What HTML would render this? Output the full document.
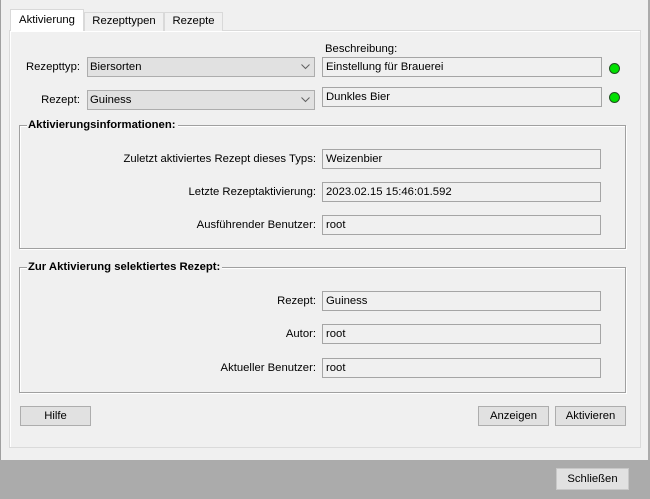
<!DOCTYPE html>
<html><head><meta charset="utf-8"><style>
*{box-sizing:border-box;margin:0;padding:0}
body{width:650px;height:499px;background:#ababab;font-family:"Liberation Sans",Arial,sans-serif;font-size:11.3px;color:#000;position:relative;overflow:hidden}
.a{position:absolute}
#win{left:0;top:0;width:648px;height:460px;background:#f0f0f0;border-left:1px solid #a0a0a0}
#panel{left:9px;top:30px;width:632px;height:418px;border:1px solid #dadada;background:#f0f0f0;box-shadow:inset 1px 1px 0 #fff}
.tab{top:12px;height:19px;border:1px solid #d9d9d9;border-bottom:none;background:#f0f0f0;text-align:center;line-height:17px}
.tab.sel{top:9px;height:22px;background:#fff;line-height:21px;z-index:2}
.lbl{white-space:nowrap;line-height:14px}
.r{text-align:right}
.tb{height:20px;border:1px solid #a5a5a5;background:#f0f0f0;padding-left:3px;line-height:18px;white-space:nowrap}
.cb{height:20px;border:1px solid #adadad;background:#e1e1e1;padding-left:2px;line-height:18px}
.cb svg{position:absolute;right:4px;top:6px}
.dot{width:11px;height:11px;border-radius:50%;background:#00e000;border:1px solid #205020}
.grp{border:1px solid #a0a0a0;box-shadow:1px 1px 0 #fff,inset 1px 1px 0 #fff}
.gt{background:#f0f0f0;font-weight:bold;padding:0 2px 0 1px;line-height:14px}
.btn{height:20px;border:1px solid #adadad;background:#e1e1e1;text-align:center;line-height:18px}
</style></head><body>
<div id="win" class="a"></div>
<div id="panel" class="a"></div>
<div class="a tab sel" style="left:10px;width:74px">Aktivierung</div>
<div class="a tab" style="left:84px;width:80px">Rezepttypen</div>
<div class="a tab" style="left:164px;width:59px">Rezepte</div>

<div class="a lbl" style="left:325px;top:42px">Beschreibung:</div>
<div class="a lbl r" style="left:0;width:80px;top:60px">Rezepttyp:</div>
<div class="a cb" style="left:87px;top:57px;width:228px">Biersorten<svg width="9" height="6"><path d="M0.5 0.5L4.5 4.5L8.5 0.5" fill="none" stroke="#606060"/></svg></div>
<div class="a tb" style="left:322px;top:57px;width:280px">Einstellung für Brauerei</div>
<div class="a dot" style="left:609px;top:63px"></div>
<div class="a lbl r" style="left:0;width:80px;top:93px">Rezept:</div>
<div class="a cb" style="left:87px;top:90px;width:228px">Guiness<svg width="9" height="6"><path d="M0.5 0.5L4.5 4.5L8.5 0.5" fill="none" stroke="#606060"/></svg></div>
<div class="a tb" style="left:322px;top:87px;width:280px">Dunkles Bier</div>
<div class="a dot" style="left:609px;top:92px"></div>

<div class="a grp" style="left:19px;top:125px;width:607px;height:124px"></div>
<div class="a gt" style="left:27px;top:118px">Aktivierungsinformationen:</div>
<div class="a lbl r" style="left:20px;width:296px;top:152px">Zuletzt aktiviertes Rezept dieses Typs:</div>
<div class="a tb" style="left:322px;top:149px;width:279px">Weizenbier</div>
<div class="a lbl r" style="left:20px;width:296px;top:185px">Letzte Rezeptaktivierung:</div>
<div class="a tb" style="left:322px;top:182px;width:279px">2023.02.15 15:46:01.592</div>
<div class="a lbl r" style="left:20px;width:296px;top:218px">Ausführender Benutzer:</div>
<div class="a tb" style="left:322px;top:215px;width:279px">root</div>

<div class="a grp" style="left:19px;top:267px;width:607px;height:126px"></div>
<div class="a gt" style="left:27px;top:260px">Zur Aktivierung selektiertes Rezept:</div>
<div class="a lbl r" style="left:20px;width:296px;top:294px">Rezept:</div>
<div class="a tb" style="left:322px;top:291px;width:279px">Guiness</div>
<div class="a lbl r" style="left:20px;width:296px;top:327px">Autor:</div>
<div class="a tb" style="left:322px;top:324px;width:279px">root</div>
<div class="a lbl r" style="left:20px;width:296px;top:361px">Aktueller Benutzer:</div>
<div class="a tb" style="left:322px;top:358px;width:279px">root</div>

<div class="a btn" style="left:20px;top:406px;width:71px">Hilfe</div>
<div class="a btn" style="left:478px;top:406px;width:71px">Anzeigen</div>
<div class="a btn" style="left:555px;top:406px;width:71px">Aktivieren</div>
<div class="a btn" style="left:556px;top:468px;width:73px;height:22px;line-height:20px;border-color:#c8c8c8">Schließen</div>
</body></html>
